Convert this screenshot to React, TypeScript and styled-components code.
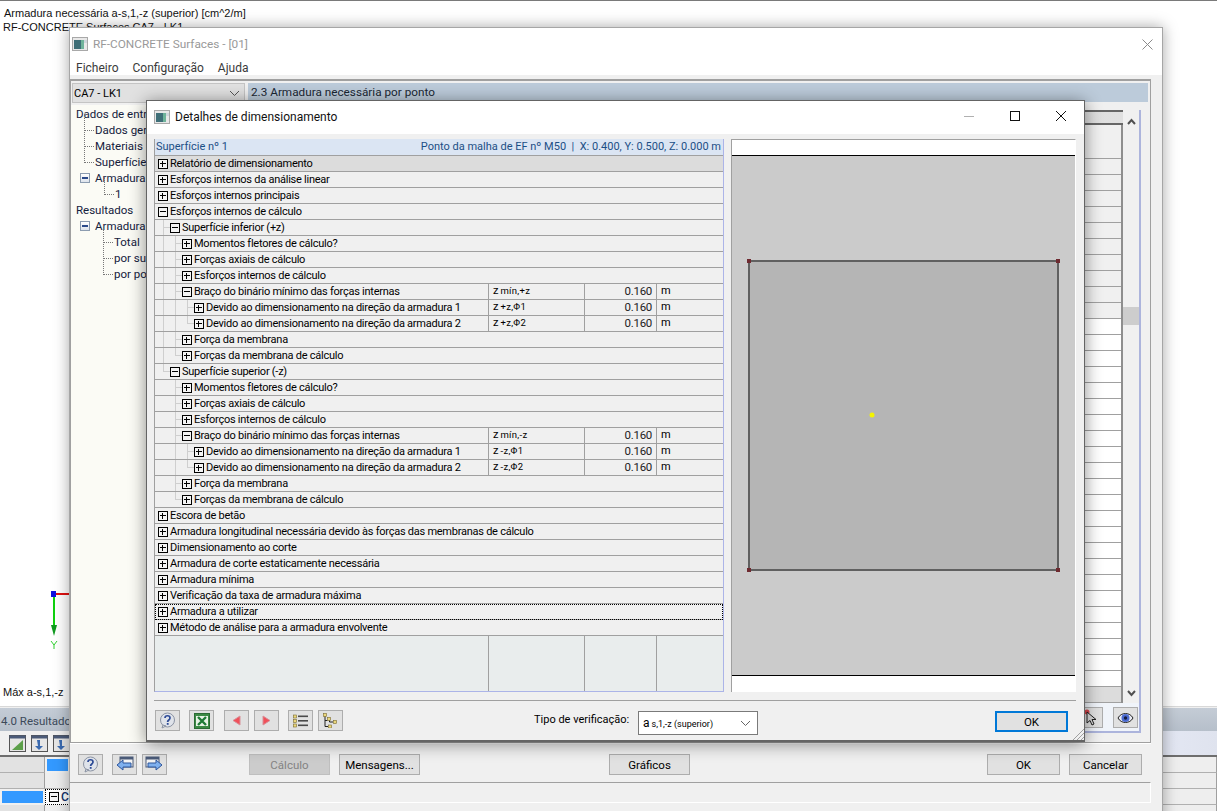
import React from 'react'
import styled, { createGlobalStyle } from 'styled-components'

const GlobalStyle = createGlobalStyle`
  html, body { margin: 0; padding: 0; background: #fff; }
  * { box-sizing: border-box; }
`

const UI_FONT = `Roboto, "Open Sans", sans-serif`

const Desktop = styled.div`
  position: relative;
  width: 1217px;
  height: 811px;
  overflow: hidden;
  background: #fff;
  border-top: 1px solid #7a7a7a;
  font-family: ${UI_FONT};
  font-size: 11.5px;
  color: #000;
`

const CanvasLabel = styled.div<{ $x: number; $y: number }>`
  position: absolute;
  left: ${p => p.$x}px;
  top: ${p => p.$y}px;
  font-family: "Liberation Sans", Arial, sans-serif;
  font-size: 11px;
  line-height: 14px;
  white-space: nowrap;
  color: #111;
`

const AxisDrawing = styled.svg`
  position: absolute;
  left: 46px;
  top: 586px;
`

/* background panel behind the windows */
const ResultsPanel = styled.div`
  position: absolute;
  left: 0;
  right: 0;
  top: 705px;
  bottom: 0;
  display: flex;
  flex-direction: column;
  border-top: 1px solid #d8d8d8;
  background: #f0f0f0;
`

const ResultsTitle = styled.div`
  height: 23px;
  flex: none;
  margin-top: 1px;
  padding: 5px 0 0 1px;
  background: linear-gradient(#c4ccd6, #b6bfca);
  font-size: 11.5px;
  line-height: 16px;
  color: #3c4a5a;
  white-space: nowrap;
`

const ResultsToolbar = styled.div`
  height: 26px;
  flex: none;
  display: flex;
  align-items: center;
  gap: 5px;
  padding-left: 9px;
  background: linear-gradient(90deg, #f0f0f0 0, #f0f0f0 70px, #e3e7f3 1170px, #dfe3ee 100%);
  border-bottom: 2px solid #6e6e6e;
`

const ToolbarGlyph = styled.svg`
  width: 17px;
  height: 17px;
`

const ResultsGrid = styled.div`
  display: grid;
  grid-template-columns: 45px 25px 1fr;
  grid-auto-rows: 16px;
`

const GridCell = styled.div<{ $tone?: 'gray' | 'blue' | 'sel' | 'plain' }>`
  display: flex;
  align-items: center;
  padding-left: ${p => (p.$tone === 'sel' ? '3px' : '0')};
  font-size: 12px;
  font-weight: 500;
  color: #12306a;
  border-right: 1px solid #a0a0a0;
  border-bottom: 1px solid #b0b0b0;
  background: ${p => (p.$tone === 'gray' ? '#e2e2e2' : p.$tone === 'blue' ? '#3399ff' : p.$tone === 'sel' ? '#fff' : '#eeeeee')};
  ${p => p.$tone === 'blue' && 'border: 2px solid #f0f0f0;'}
  ${p => p.$tone === 'sel' && 'border: 1px dotted #000;'}
`

const MainWindow = styled.div`
  position: absolute;
  left: 69px;
  top: 26px;
  width: 1094px;
  height: 800px;
  display: flex;
  flex-direction: column;
  background: #f0f0f0;
  border: 1px solid #a6a6a6;
  box-shadow: 0 0 14px rgba(0, 0, 0, 0.35);
`

const TitleBar = styled.div`
  height: 32px;
  flex: none;
  display: flex;
  align-items: center;
  background: #fff;
  padding: 0 9px 0 2px;
  font-size: 11.8px;
  color: #999;
`

const TitleText = styled.span`
  margin-left: 5px;
  flex: 1;
`

const MenuBar = styled.div`
  height: 15px;
  flex: none;
  display: flex;
  gap: 14px;
  padding: 2px 0 0 6px;
  background: #fff;
  font-size: 12px;
  line-height: 13px;
  color: #3a3a3a;
`

const MenuItem = styled.span`
  white-space: nowrap;
`

const WindowBody = styled.div`
  flex: none;
  height: 668px;
  padding-top: 4px;
`

const Frame = styled.div`
  width: 1081px;
  height: 664px;
  display: flex;
  gap: 3px;
  border: 1px solid #a0a0a0;
  border-top-width: 2px;
  padding: 2px 2px 0 0;
  box-shadow: 0 1px 0 #fff;
`

const NavColumn = styled.div`
  width: 174px;
  flex: none;
  display: flex;
  flex-direction: column;
`

const CaseSelect = styled.div`
  height: 20px;
  margin-left: 1px;
  display: flex;
  align-items: center;
  justify-content: space-between;
  padding: 0 4px 0 1px;
  background: #e1e1e1;
  border: 1px solid #c4c4c4;
  font-size: 11px;
  flex: none;
`

const NavTree = styled.div`
  flex: 1;
  margin-top: 2px;
  padding-top: 1px;
  background: #fbfbf5;
  overflow: hidden;
  color: #14203c;
  font-size: 11.5px;
`

const NavItem = styled.div<{ $indent: number; $dot?: boolean }>`
  position: relative;
  height: 16px;
  line-height: 16px;
  padding-left: ${p => p.$indent}px;
  white-space: nowrap;
  ${p =>
    p.$dot &&
    `&::before {
      content: '';
      position: absolute;
      left: ${p.$indent - 11}px;
      bottom: 7px;
      width: 9px;
      height: 16px;
      border-left: 1px dotted #777;
      border-bottom: 1px dotted #777;
    }`}
`

const NavToggle = styled.span`
  position: absolute;
  left: 9px;
  top: 3px;
  width: 10px;
  height: 10px;
  border: 1px solid #8c9cb0;
  background: linear-gradient(#fff, #dde3ec);

  &::after {
    content: '';
    position: absolute;
    left: 1px;
    right: 1px;
    top: 3px;
    height: 2px;
    background: #2b4a8a;
  }
`

const ContentColumn = styled.div`
  flex: 1;
  min-width: 0;
  display: flex;
  flex-direction: column;
`

const SectionHeader = styled.div`
  height: 19px;
  flex: none;
  padding-left: 3px;
  background: #bccbda;
  font-size: 11.75px;
  line-height: 18px;
  color: #1b2733;
  white-space: nowrap;
`

const TableArea = styled.div`
  margin-top: 8px;
  margin-right: 7px;
  display: flex;
  flex-direction: column;
  height: 623px;
  flex: none;
  border-right: 2px solid #acb4dc;
  border-bottom: 2px solid #acb4dc;
  background: #f0f4fa;
`

const TableScrollRow = styled.div`
  display: flex;
  height: 593px;
  flex: none;
`

const BackTable = styled.div`
  flex: 1;
  display: flex;
  flex-direction: column;
  border-right: 2px solid #8e8e8e;
  background: #f0f0f0;
`

const BackHeader = styled.div`
  height: 15px;
  flex: none;
  border: 2px solid #666;
  border-left: none;
  border-right: none;
  margin-right: -2px;
  background: linear-gradient(90deg, #c8c8c8, #e0e0e0);
`

const BackRow = styled.div<{ $tone?: 'white' | 'gray'; $h?: number }>`
  height: ${p => p.$h ?? 16}px;
  flex: none;
  border-bottom: 1px solid #a0a0a0;
  background: ${p => (p.$tone === 'white' ? '#fff' : p.$tone === 'gray' ? '#dcdcdc' : '#f0f0f0')};
`

const Scrollbar = styled.div`
  width: 16px;
  flex: none;
  display: flex;
  flex-direction: column;
  align-items: center;
  justify-content: space-between;
  padding: 8px 0 6px;
  background: #f0f0f0;
  color: #505050;
`

const ScrollThumb = styled.div`
  width: 16px;
  height: 18px;
  background: #cdcdcd;
  margin: 182px 0 auto;
`

const BackToolbar = styled.div`
  flex: 1;
  display: flex;
  justify-content: flex-end;
  align-items: center;
  gap: 10px;
  padding: 1px 1px 0 0;
`

const SquareButton = styled.div<{ $gap?: number; $w?: number }>`
  width: ${p => p.$w ?? 25}px;
  height: 21px;
  flex: none;
  margin-left: ${p => p.$gap ?? 0}px;
  display: flex;
  align-items: center;
  justify-content: center;
  background: #e1e1e1;
  border: 1px solid #adadad;
`

const TextButton = styled.div<{ $gap?: number; $w?: number; $disabled?: boolean; $default?: boolean }>`
  width: ${p => p.$w ?? 81}px;
  height: 21px;
  flex: none;
  margin-left: ${p => p.$gap ?? 0}px;
  margin-top: ${p => (p.$default ? '1px' : '0')};
  display: flex;
  align-items: center;
  justify-content: center;
  font-size: 11.5px;
  background: ${p => (p.$disabled ? '#cccccc' : '#e1e1e1')};
  color: ${p => (p.$disabled ? '#838383' : '#000')};
  border: ${p => (p.$default ? '2px solid #0078d7' : `1px solid ${p.$disabled ? '#bfbfbf' : '#adadad'}`)};
`

const WindowFooter = styled.div`
  height: 39px;
  flex: none;
  display: flex;
  align-items: center;
  padding: 4px 0 0 8px;
`

const StatusBar = styled.div`
  width: 1081px;
  height: 21px;
  flex: none;
  border-top: 1px solid #a0a0a0;
  border-bottom: 1px solid #fff;
  border-right: 1px solid #fff;
`

/* the details dialog */
const Dialog = styled.div`
  position: absolute;
  left: 146px;
  top: 99px;
  width: 939px;
  height: 642px;
  display: flex;
  flex-direction: column;
  background: #f0f0f0;
  border: 1px solid #646464;
  border-bottom-width: 2px;
  box-shadow: 0 2px 16px rgba(0, 0, 0, 0.45);
`

const DialogTitleBar = styled.div`
  height: 33px;
  flex: none;
  display: flex;
  align-items: center;
  padding: 0 0 2px 7px;
  background: #fff;
  font-size: 12px;
  color: #111;
`

const DialogTitle = styled.span`
  margin-left: 5px;
  flex: 1;
  white-space: nowrap;
`

const CaptionButton = styled.span`
  width: 46px;
  height: 30px;
  align-self: flex-start;
  display: flex;
  align-items: center;
  justify-content: center;
`

const DialogContent = styled.div`
  height: 553px;
  flex: none;
  margin: 5px 8px 0 7px;
  display: flex;
  gap: 7px;
`

const TreeTable = styled.div`
  width: 570px;
  flex: none;
  display: flex;
  flex-direction: column;
  border-left: 1px solid #a0a0a0;
  border-right: 1px solid #acb4e8;
  border-bottom: 1px solid #acb4e8;
`

const TreeHeader = styled.div`
  height: 17px;
  flex: none;
  display: flex;
  justify-content: space-between;
  padding: 0 2px 0 1px;
  background: #dbe5f3;
  border-bottom: 1px solid #a0a0a0;
  color: #1c4f86;
  font-size: 11px;
  line-height: 15px;
  white-space: nowrap;
`

const TreeRow = styled.div<{ $highlight?: boolean; $focus?: boolean }>`
  height: 16px;
  flex: none;
  display: grid;
  grid-template-columns: 333px 96px 72px 1fr;
  border-bottom: 1px solid #a0a0a0;
  background: ${p => (p.$highlight ? '#dcdcdc' : '#f0f0f0')};
  ${p => p.$focus && 'outline: 1px dotted #000; outline-offset: -1px;'}
`

const LabelCell = styled.div<{ $span?: boolean }>`
  ${p => p.$span && 'grid-column: 1 / -1;'}
  display: flex;
  align-items: center;
  padding-left: 3px;
  font-size: 11px;
  letter-spacing: -0.25px;
  white-space: nowrap;
  line-height: 14px;
  min-width: 0;
  overflow: hidden;
`

const GuideCell = styled.span<{ $kind: string }>`
  width: 12px;
  height: 15px;
  flex: none;
  position: relative;

  &::before {
    content: '';
    display: ${p => (p.$kind === ' ' ? 'none' : 'block')};
    position: absolute;
    left: 5px;
    top: 0;
    width: 1px;
    height: ${p => (p.$kind === 'l' ? '8px' : '16px')};
    background: #cfcfcf;
  }

  &::after {
    content: '';
    display: ${p => (p.$kind === 'b' || p.$kind === 'l' ? 'block' : 'none')};
    position: absolute;
    left: 5px;
    top: 7px;
    width: 7px;
    height: 1px;
    background: #cfcfcf;
  }
`

const ToggleBox = styled.span<{ $open?: boolean }>`
  width: 10px;
  height: 10px;
  flex: none;
  margin-right: 2px;
  position: relative;
  border: 1px solid #000;
  background: #f4f4f4;

  &::before {
    content: '';
    position: absolute;
    left: 1px;
    right: 1px;
    top: 3px;
    height: 2px;
    background: linear-gradient(#000 50%, transparent 50%);
  }

  &::after {
    content: '';
    display: ${p => (p.$open ? 'none' : 'block')};
    position: absolute;
    left: 3px;
    top: 1px;
    bottom: 1px;
    width: 1px;
    background: #000;
  }
`

const ValueCell = styled.div<{ $align?: 'left' | 'right' }>`
  border-left: 1px solid #a0a0a0;
  padding: ${p => (p.$align === 'right' ? '0 4px 0 0' : '0 0 0 4px')};
  text-align: ${p => p.$align ?? 'left'};
  font-size: 11px;
  line-height: 14px;
  white-space: nowrap;
`

const SymbolSub = styled.span`
  font-size: 9.5px;
  letter-spacing: 0.3px;
  margin-left: 2px;
`

const NumberValue = styled.span`
  font-size: 11.5px;
  letter-spacing: -0.3px;
  color: #222;
`

const TreeFiller = styled.div`
  flex: 1;
  display: grid;
  grid-template-columns: 333px 96px 72px 1fr;
  background: #e9eded;
`

const FillerCell = styled.div`
  border-left: 1px solid #a0a0a0;
  &:first-child {
    border-left: none;
  }
`

const Preview = styled.div`
  width: 345px;
  flex: none;
  display: flex;
  flex-direction: column;
  background: #fff;
  border-top: 1px solid #a0a0a0;
  border-left: 1px solid #a0a0a0;
  border-right: 1px solid #fff;
`

const PreviewStrip = styled.div<{ $h: number }>`
  height: ${p => p.$h}px;
  flex: none;
  background: #fff;
`

const PreviewStage = styled.div`
  flex: 1;
  display: flex;
  align-items: center;
  justify-content: center;
  background: #cbcbcb;
  border-top: 1px solid #000;
  border-bottom: 1px solid #000;
`

const DialogFooter = styled.div`
  flex: 1;
  margin: 8px 8px 0 7px;
  display: flex;
  align-items: flex-start;
  padding-top: 9px;
  padding-left: 1px;
  border-top: 1px solid #a0a0a0;
`

const VerifyLabel = styled.span`
  width: 94px;
  flex: none;
  margin-left: 191px;
  margin-top: 3px;
  font-size: 11px;
  white-space: nowrap;
`

const VerifySelect = styled.div`
  width: 120px;
  height: 24px;
  flex: none;
  margin: 1px 0 0 10px;
  display: flex;
  align-items: center;
  justify-content: space-between;
  padding: 0 6px 0 4px;
  background: #fff;
  border: 1px solid #7a7a7a;
  white-space: nowrap;
  font-size: 12px;
`

const SmallPrint = styled.span`
  font-size: 9px;
  margin-left: 2px;
`

const ResizeGrip = styled.svg`
  position: absolute;
  right: 0;
  bottom: 0;
`

const Chevron = ({ color = '#555' }: { color?: string }) => (
  <svg width="11" height="7" viewBox="0 0 11 7" fill="none" stroke={color}>
    <path d="M1 1l4.5 4.5L10 1" />
  </svg>
)

const ScrollArrow = ({ up }: { up?: boolean }) => (
  <svg width="9" height="7" viewBox="0 0 9 7" fill="none" stroke="#505050" strokeWidth="2">
    <path d={up ? 'M1 6l3.5-4L8 6' : 'M1 1l3.5 4L8 1'} />
  </svg>
)

const AppIcon = () => (
  <svg width="16" height="14" viewBox="0 0 16 14">
    <rect x="0.5" y="0.5" width="15" height="13" fill="#e8e8e8" stroke="#a8a8a8" />
    <rect x="2" y="3" width="7" height="9" fill="#3f6f78" />
    <rect x="9" y="3" width="3" height="9" fill="#6fb39a" />
    <rect x="12" y="3" width="3" height="3" fill="#cfd6dc" />
  </svg>
)

const HelpIcon = () => (
  <svg width="17" height="17" viewBox="0 0 17 17">
    <circle cx="8.5" cy="8" r="7" fill="#dfe3ea" stroke="#8b93a3" />
    <path d="M4 13l-1 3 4-2z" fill="#dfe3ea" stroke="#8b93a3" />
    <path d="M6 6c0-3 5-3 5 0 0 2-2.400 2-2.400 4" fill="none" stroke="#2c4a96" strokeWidth="1.700" />
    <rect x="7.800" y="11" width="1.800" height="1.800" fill="#2c4a96" />
  </svg>
)

const ExcelIcon = () => (
  <svg width="16" height="16" viewBox="0 0 16 16">
    <rect x="0.500" y="0.500" width="15" height="15" fill="#3c8a45" stroke="#2a6a34" />
    <rect x="2" y="3" width="12" height="10" fill="#e8f3e6" />
    <path d="M4 4l8 8M12 4l-8 8" stroke="#1e7a35" strokeWidth="2.400" />
  </svg>
)

const TriangleIcon = ({ right }: { right?: boolean }) => (
  <svg width="9" height="11" viewBox="0 0 9 11">
    <path d={right ? 'M1 1l7 4.500-7 4.500z' : 'M8 1L1 5.500 8 10z'} fill="#f0505a" stroke="#d89098" />
  </svg>
)

const ListIcon = () => (
  <svg width="15" height="14" viewBox="0 0 15 14">
    {[1, 5.500, 10].map(y => (
      <g key={y}>
        <rect x="0.500" y={y} width="3" height="3" fill="#ead77a" stroke="#7a6a30" strokeWidth="0.600" />
        <rect x="5" y={y + 0.500} width="10" height="1.600" fill="#4a4a4a" />
      </g>
    ))}
  </svg>
)

const TreeIcon = () => (
  <svg width="15" height="15" viewBox="0 0 15 15">
    <path d="M2 3v10.500h3M2 7.500h2.500M6.500 7v2h3.500" fill="none" stroke="#222" />
    {[
      [0.500, 0.500],
      [4.500, 4.500],
      [10.500, 7.500],
      [5.500, 12]
    ].map(([x, y]) => (
      <rect key={`${x}-${y}`} x={x} y={y} width="3" height="3" fill="#ead77a" stroke="#7a6a30" strokeWidth="0.600" />
    ))}
  </svg>
)

const WindowArrowIcon = ({ right }: { right?: boolean }) => (
  <svg width="19" height="17" viewBox="0 0 19 17">
    <rect x={right ? 1 : 5} y="1" width="13" height="10" fill="#f4f4f4" stroke="#4a5a78" />
    <rect x={right ? 1 : 5} y="1" width="13" height="2.500" fill="#4a5a78" />
    <path
      d={right ? 'M3 7h8V4l6 5-6 5v-3H3z' : 'M16 7H8V4L2 9l6 5v-3h8z'}
      fill="#7fb0ee"
      stroke="#2f569c"
    />
  </svg>
)

const CursorIcon = () => (
  <svg width="16" height="18" viewBox="0 0 16 18">
    <circle cx="4" cy="3" r="2.500" fill="#d8434b" />
    <path d="M4 3l0 11 3-2.500 2 4.500 2-1-2-4.500 4 0z" fill="#d8d8d8" stroke="#222" />
  </svg>
)

const EyeIcon = () => (
  <svg width="17" height="12" viewBox="0 0 17 12">
    <path d="M1 6c3-6 12-6 15 0-3 6-12 6-15 0z" fill="#e8eaf2" stroke="#222" />
    <circle cx="8.500" cy="6" r="4" fill="#4a6ad0" />
    <circle cx="8.500" cy="6" r="1.700" fill="#141c3c" />
  </svg>
)

const CaptionIcon = ({ kind }: { kind: 'min' | 'max' | 'close' }) => (
  <svg width="12" height="12" viewBox="0 0 12 12" fill="none" stroke={kind === 'min' ? '#b0b0b0' : '#111'}>
    {kind === 'min' && <path d="M1 6.500h10" />}
    {kind === 'max' && <rect x="1.500" y="1.500" width="9" height="9" />}
    {kind === 'close' && <path d="M1 1l10 10M11 1L1 11" />}
  </svg>
)

const MeshDrawing = () => (
  <svg width="320" height="320" viewBox="0 0 320 320">
    <rect x="5" y="5" width="309" height="309" fill="#b5b5b5" stroke="#606060" strokeWidth="2" />
    {[
      [5, 5],
      [314, 5],
      [5, 314],
      [314, 314]
    ].map(([x, y]) => (
      <rect key={`${x}-${y}`} x={x - 2} y={y - 2} width="4" height="4" fill="#6e2a30" />
    ))}
    <circle cx="128" cy="159" r="2.500" fill="#f4f400" />
  </svg>
)

interface RowData {
  label: string
  guides?: string
  open?: boolean
  symbol?: [string, string]
  value?: string
  highlight?: boolean
  focus?: boolean
}

const designBranch = (g: string, side: string, sign: string): RowData[] => [
  { label: 'Momentos fletores de cálculo?', guides: `${g}b` },
  { label: 'Forças axiais de cálculo', guides: `${g}b` },
  { label: 'Esforços internos de cálculo', guides: `${g}b` },
  {
    label: 'Braço do binário mínimo das forças internas',
    guides: `${g}b`,
    open: true,
    symbol: ['z', `mín,${side}`],
    value: '0.160'
  },
  {
    label: 'Devido ao dimensionamento na direção da armadura 1',
    guides: `${g}vb`,
    symbol: ['z', `${sign}z,Φ1`],
    value: '0.160'
  },
  {
    label: 'Devido ao dimensionamento na direção da armadura 2',
    guides: `${g}vl`,
    symbol: ['z', `${sign}z,Φ2`],
    value: '0.160'
  },
  { label: 'Força da membrana', guides: `${g}b` },
  { label: 'Forças da membrana de cálculo', guides: `${g}l` }
]

const rows: RowData[] = [
  { label: 'Relatório de dimensionamento', highlight: true },
  { label: 'Esforços internos da análise linear' },
  { label: 'Esforços internos principais' },
  { label: 'Esforços internos de cálculo', open: true },
  { label: 'Superfície inferior (+z)', guides: 'b', open: true },
  ...designBranch('v', '+z', '+'),
  { label: 'Superfície superior (-z)', guides: 'l', open: true },
  ...designBranch(' ', '-z', '-'),
  { label: 'Escora de betão' },
  { label: 'Armadura longitudinal necessária devido às forças das membranas de cálculo' },
  { label: 'Dimensionamento ao corte' },
  { label: 'Armadura de corte estaticamente necessária' },
  { label: 'Armadura mínima' },
  { label: 'Verificação da taxa de armadura máxima' },
  { label: 'Armadura a utilizar', focus: true },
  { label: 'Método de análise para a armadura envolvente' }
]

const renderRow = (row: RowData) => {
  const label = (
    <LabelCell $span={!row.value}>
      {(row.guides ?? '').split('').map((kind, i) => (
        <GuideCell key={i} $kind={kind} />
      ))}
      <ToggleBox $open={row.open} />
      {row.label}
    </LabelCell>
  )
  return (
    <TreeRow key={`${row.guides}-${row.label}`} $highlight={row.highlight} $focus={row.focus}>
      {label}
      {row.value && row.symbol && (
        <>
          <ValueCell>
            {row.symbol[0]}
            <SymbolSub>{row.symbol[1]}</SymbolSub>
          </ValueCell>
          <ValueCell $align="right">
            <NumberValue>{row.value}</NumberValue>
          </ValueCell>
          <ValueCell>m</ValueCell>
        </>
      )}
    </TreeRow>
  )
}

export default function App() {
  return (
    <Desktop>
      <GlobalStyle />
      <CanvasLabel $x={4} $y={5}>Armadura necessária a-s,1,-z (superior) [cm^2/m]</CanvasLabel>
      <CanvasLabel $x={3} $y={19}>RF-CONCRETE Surfaces CA7 - LK1</CanvasLabel>
      <CanvasLabel $x={3} $y={684}>Máx a-s,1,-z</CanvasLabel>
      <AxisDrawing width="24" height="64" viewBox="0 0 24 64">
        <path d="M8 7h16" stroke="#e01010" strokeWidth="2" />
        <path d="M8 8v34" stroke="#10d010" strokeWidth="2" />
        <path d="M5 38h6l-3 11z" fill="#109a20" />
        <rect x="5" y="4" width="5" height="6" fill="#1010e0" />
        <path d="M5 54l3 4 3-4M8 58v4" fill="none" stroke="#30d030" />
      </AxisDrawing>

      <ResultsPanel>
        <ResultsTitle>4.0 Resultados</ResultsTitle>
        <ResultsToolbar>
          {['#5ca04a', '#3a6ab0', '#3a6ab0'].map((c, i) => (
            <ToolbarGlyph key={i} viewBox="0 0 17 17">
              <rect x="0.500" y="0.500" width="16" height="16" fill="#e6e6e6" stroke="#555" />
              <rect x="0.500" y="0.500" width="16" height="3" fill="#4a5a78" />
              <path d={i === 0 ? 'M3 15L14 5v10z' : 'M6 5h3v6h3l-4 4-4-4h3z'} fill={c} />
            </ToolbarGlyph>
          ))}
        </ResultsToolbar>
        <ResultsGrid>
          <GridCell $tone="gray" />
          <GridCell $tone="blue" />
          <GridCell />
          <GridCell $tone="gray" />
          <GridCell />
          <GridCell />
          <GridCell $tone="blue" />
          <GridCell $tone="sel">
            <ToggleBox $open />C
          </GridCell>
          <GridCell />
          <GridCell $tone="gray" />
          <GridCell />
          <GridCell />
        </ResultsGrid>
      </ResultsPanel>

      <MainWindow>
        <TitleBar>
          <AppIcon />
          <TitleText>RF-CONCRETE Surfaces - [01]</TitleText>
          <svg width="11" height="11" viewBox="0 0 11 11" stroke="#8a8a8a" fill="none">
            <path d="M0.500 0.500l10 10M10.500 0.500l-10 10" />
          </svg>
        </TitleBar>
        <MenuBar>
          <MenuItem>Ficheiro</MenuItem>
          <MenuItem>Configuração</MenuItem>
          <MenuItem>Ajuda</MenuItem>
        </MenuBar>
        <WindowBody>
          <Frame>
            <NavColumn>
              <CaseSelect>
                CA7 - LK1
                <Chevron />
              </CaseSelect>
              <NavTree>
                <NavItem $indent={5}>Dados de entrada</NavItem>
                <NavItem $indent={24} $dot>Dados gerais</NavItem>
                <NavItem $indent={24} $dot>Materiais</NavItem>
                <NavItem $indent={24} $dot>Superfícies</NavItem>
                <NavItem $indent={24}>
                  <NavToggle />
                  Armadura
                </NavItem>
                <NavItem $indent={44} $dot>1</NavItem>
                <NavItem $indent={5}>Resultados</NavItem>
                <NavItem $indent={24}>
                  <NavToggle />
                  Armadura
                </NavItem>
                <NavItem $indent={43} $dot>Total</NavItem>
                <NavItem $indent={43} $dot>por superfície</NavItem>
                <NavItem $indent={43} $dot>por ponto</NavItem>
              </NavTree>
            </NavColumn>
            <ContentColumn>
              <SectionHeader>2.3 Armadura necessária por ponto</SectionHeader>
              <TableArea>
                <TableScrollRow>
                  <BackTable>
                    <BackHeader />
                    <BackRow $h={34} />
                    {Array.from({ length: 10 }, (_, i) => (
                      <BackRow key={i} />
                    ))}
                    {Array.from({ length: 23 }, (_, i) => (
                      <BackRow key={i} $tone="white" />
                    ))}
                    <BackRow $tone="gray" />
                  </BackTable>
                  <Scrollbar>
                    <ScrollArrow up />
                    <ScrollThumb />
                    <ScrollArrow />
                  </Scrollbar>
                </TableScrollRow>
                <BackToolbar>
                  <SquareButton>
                    <CursorIcon />
                  </SquareButton>
                  <SquareButton>
                    <EyeIcon />
                  </SquareButton>
                </BackToolbar>
              </TableArea>
            </ContentColumn>
          </Frame>
        </WindowBody>
        <WindowFooter>
          <SquareButton>
            <HelpIcon />
          </SquareButton>
          <SquareButton $gap={9}>
            <WindowArrowIcon />
          </SquareButton>
          <SquareButton $gap={5}>
            <WindowArrowIcon right />
          </SquareButton>
          <TextButton $gap={82} $disabled>Cálculo</TextButton>
          <TextButton $gap={9}>Mensagens...</TextButton>
          <TextButton $gap={189}>Gráficos</TextButton>
          <TextButton $gap={297} $w={73}>OK</TextButton>
          <TextButton $gap={9} $w={73}>Cancelar</TextButton>
        </WindowFooter>
        <StatusBar />
      </MainWindow>

      <Dialog>
        <DialogTitleBar>
          <AppIcon />
          <DialogTitle>Detalhes de dimensionamento</DialogTitle>
          <CaptionButton>
            <CaptionIcon kind="min" />
          </CaptionButton>
          <CaptionButton>
            <CaptionIcon kind="max" />
          </CaptionButton>
          <CaptionButton>
            <CaptionIcon kind="close" />
          </CaptionButton>
        </DialogTitleBar>
        <DialogContent>
          <TreeTable>
            <TreeHeader>
              <span>Superfície nº 1</span>
              <span>Ponto da malha de EF nº M50 &nbsp;|&nbsp; X: 0.400, Y: 0.500, Z: 0.000 m</span>
            </TreeHeader>
            {rows.map(renderRow)}
            <TreeFiller>
              <FillerCell />
              <FillerCell />
              <FillerCell />
              <FillerCell />
            </TreeFiller>
          </TreeTable>
          <Preview>
            <PreviewStrip $h={15} />
            <PreviewStage>
              <MeshDrawing />
            </PreviewStage>
            <PreviewStrip $h={16} />
          </Preview>
        </DialogContent>
        <DialogFooter>
          <SquareButton>
            <HelpIcon />
          </SquareButton>
          <SquareButton $gap={9}>
            <ExcelIcon />
          </SquareButton>
          <SquareButton $gap={10}>
            <TriangleIcon />
          </SquareButton>
          <SquareButton $gap={5}>
            <TriangleIcon right />
          </SquareButton>
          <SquareButton $gap={9}>
            <ListIcon />
          </SquareButton>
          <SquareButton $gap={5}>
            <TreeIcon />
          </SquareButton>
          <VerifyLabel>Tipo de verificação:</VerifyLabel>
          <VerifySelect>
            <span>
              a<SmallPrint>s,1,-z (superior)</SmallPrint>
            </span>
            <Chevron color="#666" />
          </VerifySelect>
          <TextButton $gap={237} $w={73} $default>OK</TextButton>
        </DialogFooter>
        <ResizeGrip width="11" height="11" viewBox="0 0 11 11" stroke="#a0a0a0">
          <path d="M0 11L11 0M4 11l7-7M8 11l3-3" />
        </ResizeGrip>
      </Dialog>
    </Desktop>
  )
}
